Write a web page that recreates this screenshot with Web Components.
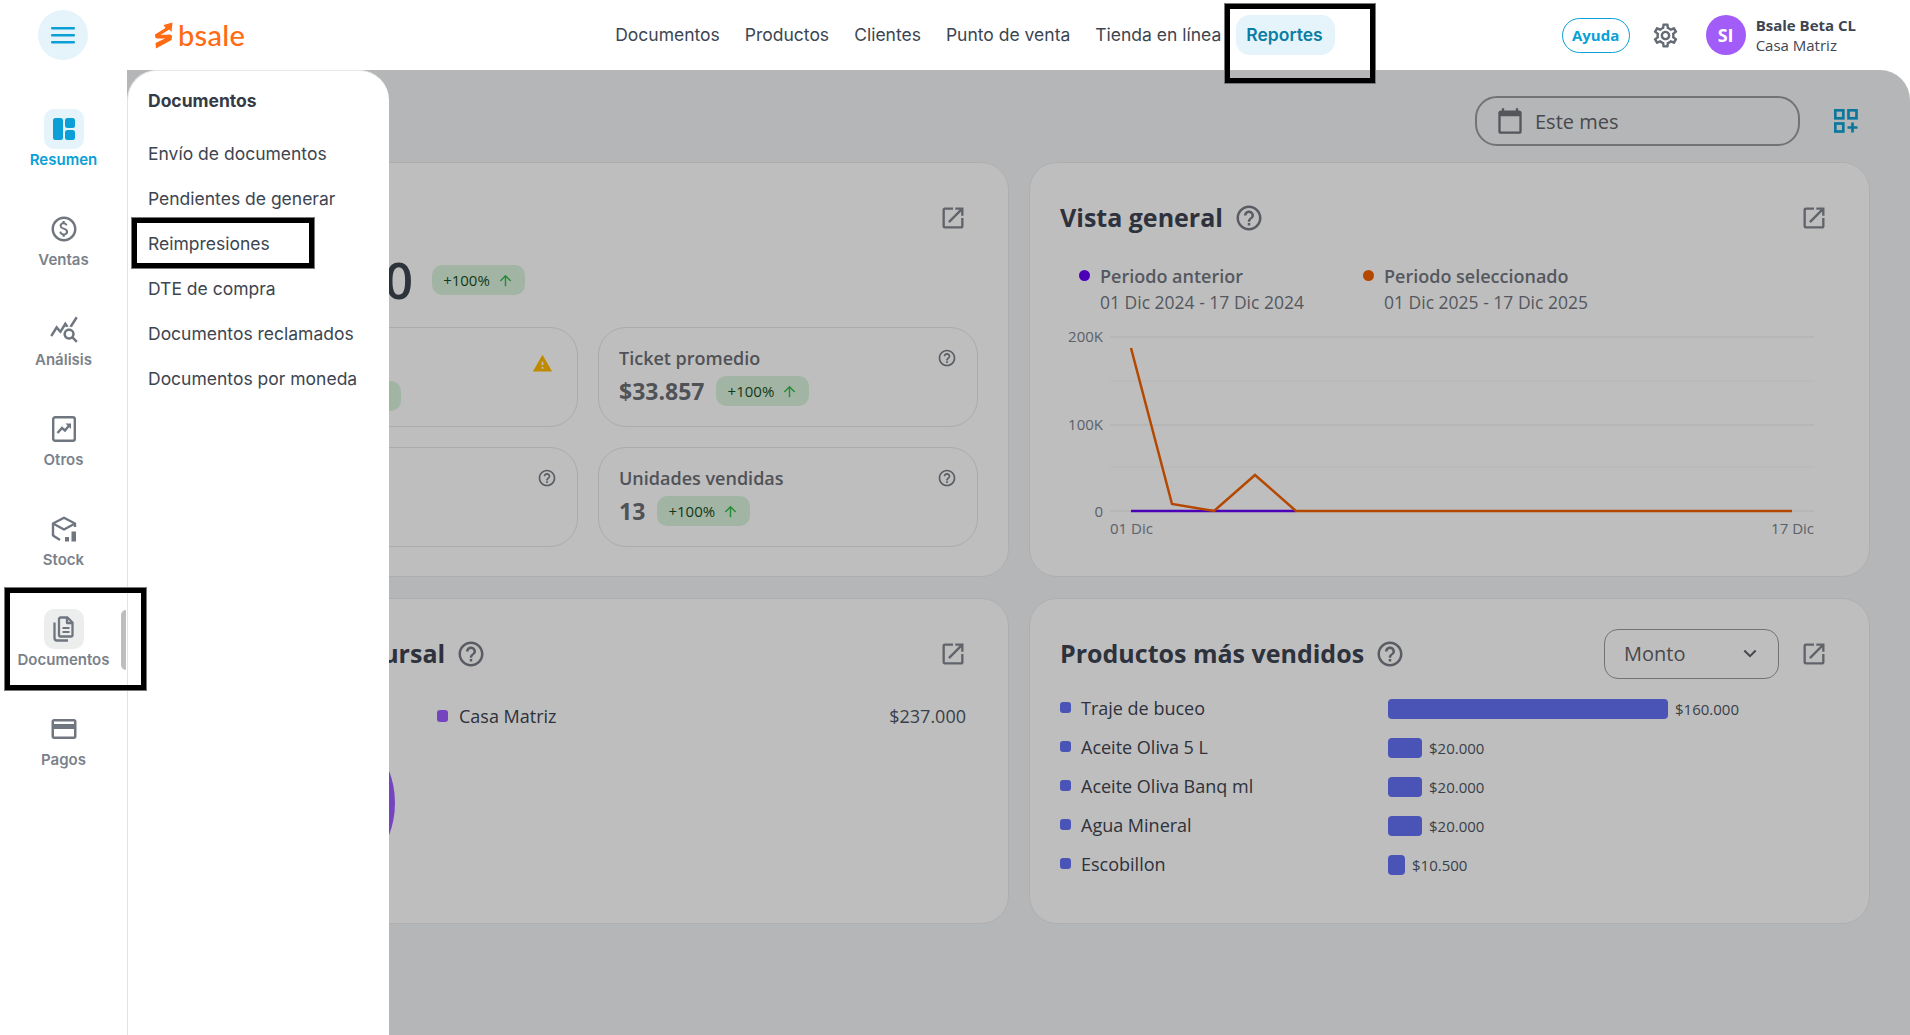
<!DOCTYPE html>
<html lang="es"><head><meta charset="utf-8"><title>Bsale</title>
<style>
html,body{margin:0;height:100%;overflow:hidden;background:#fff;font-family:"Open Sans",sans-serif;color:#2f3640}
</style></head><body>
<app-shell></app-shell>
<script>
const P={
help:'M11 18h2v-2h-2v2zm1-16C6.48 2 2 6.48 2 12s4.48 10 10 10 10-4.48 10-10S17.52 2 12 2zm0 18c-4.41 0-8-3.59-8-8s3.59-8 8-8 8 3.59 8 8-3.59 8-8 8zm0-14c-2.21 0-4 1.79-4 4h2c0-1.1.9-2 2-2s2 .9 2 2c0 2-3 1.75-3 5h2c0-2.25 3-2.5 3-5 0-2.21-1.79-4-4-4z',
open:'M19 19H5V5h7V3H5a2 2 0 0 0-2 2v14a2 2 0 0 0 2 2h14c1.1 0 2-.9 2-2v-7h-2v7zM14 3v2h3.59l-9.83 9.83 1.41 1.41L19 6.41V10h2V3h-7z',
cal:'M20 3h-1V1h-2v2H7V1H5v2H4c-1.1 0-2 .9-2 2v16c0 1.1.9 2 2 2h16c1.1 0 2-.9 2-2V5c0-1.1-.9-2-2-2zm0 18H4V8h16v13z',
warn:'M1 21h22L12 2 1 21zm12-3h-2v-2h2v2zm0-4h-2v-4h2v4z',
up:'M4 12l1.41 1.41L11 7.83V20h2V7.83l5.58 5.59L20 12l-8-8-8 8z',
gear:'M19.43 12.98c.04-.32.07-.64.07-.98 0-.34-.03-.66-.07-.98l2.11-1.65c.19-.15.24-.42.12-.64l-2-3.46a.5.5 0 0 0-.61-.22l-2.49 1c-.52-.4-1.08-.73-1.69-.98l-.38-2.65A.488.488 0 0 0 14 2h-4c-.25 0-.46.18-.49.42l-.38 2.65c-.61.25-1.17.59-1.69.98l-2.49-1a.566.566 0 0 0-.18-.03c-.17 0-.34.09-.43.25l-2 3.46c-.13.22-.07.49.12.64l2.11 1.65c-.04.32-.07.65-.07.98 0 .33.03.66.07.98l-2.11 1.65c-.19.15-.24.42-.12.64l2 3.46a.5.5 0 0 0 .61.22l2.49-1c.52.4 1.08.73 1.69.98l.38 2.65c.03.24.24.42.49.42h4c.25 0 .46-.18.49-.42l.38-2.65c.61-.25 1.17-.59 1.69-.98l2.49 1c.06.02.12.03.18.03.17 0 .34-.09.43-.25l2-3.46c.12-.22.07-.49-.12-.64l-2.11-1.65zm-1.98-1.71c.04.31.05.52.05.73 0 .21-.02.43-.05.73l-.14 1.13.89.7 1.08.84-.7 1.21-1.27-.51-1.04-.42-.9.68c-.43.32-.84.56-1.25.73l-1.06.43-.16 1.13-.2 1.35h-1.4l-.19-1.35-.16-1.13-1.06-.43c-.43-.18-.83-.41-1.23-.71l-.91-.7-1.06.43-1.27.51-.7-1.21 1.08-.84.89-.7-.14-1.13c-.03-.31-.05-.54-.05-.74s.02-.43.05-.73l.14-1.13-.89-.7-1.08-.84.7-1.21 1.27.51 1.04.42.9-.68c.43-.32.84-.56 1.25-.73l1.06-.43.16-1.13.2-1.35h1.39l.19 1.35.16 1.13 1.06.43c.43.18.83.41 1.23.71l.91.7 1.06-.43 1.27-.51.7 1.21-1.07.85-.89.7.14 1.13zM12 8c-2.21 0-4 1.79-4 4s1.79 4 4 4 4-1.79 4-4-1.79-4-4-4zm0 6c-1.1 0-2-.9-2-2s.9-2 2-2 2 .9 2 2-.9 2-2 2z',
card:'M20 4H4c-1.11 0-1.99.89-1.99 2L2 18c0 1.11.89 2 2 2h16c1.11 0 2-.89 2-2V6c0-1.11-.89-2-2-2zm0 14H4v-6h16v6zm0-10H4V6h16v2z',
money:'M12 2C6.48 2 2 6.48 2 12s4.48 10 10 10 10-4.48 10-10S17.52 2 12 2zm0 18c-4.41 0-8-3.59-8-8s3.59-8 8-8 8 3.59 8 8-3.59 8-8 8zM12.4 11.1c-1.6-.5-2.3-.85-2.3-1.7 0-.9 1-1.25 1.6-1.25 1.15 0 1.6.9 1.7 1.2l1.4-.6c-.15-.4-.75-1.7-2.25-2V5.6h-1.8v1.15c-2.2.5-2.2 2.55-2.2 2.65 0 2 2 2.6 3 2.95 1.4.5 2 .95 2 1.8 0 1-1 1.45-1.75 1.45-1.6 0-2.1-1.65-2.15-1.85l-1.45.6c.55 1.95 2 2.45 2.65 2.6v1.15h1.8v-1.1c.45-.1 2.65-.55 2.65-2.85 0-1.25-.55-2.3-2.9-3.05z',
stats:'M19.88 18.47c.44-.7.7-1.51.7-2.39 0-2.49-2.01-4.5-4.5-4.5s-4.5 2.01-4.5 4.5 2.01 4.5 4.49 4.5c.88 0 1.7-.26 2.39-.7L21.58 23 23 21.58l-3.12-3.11zm-3.8.11a2.5 2.5 0 0 1 0-5 2.5 2.5 0 0 1 0 5zm-.36-8.5c-.74.02-1.45.18-2.1.45l-.55-.83-3.8 6.18-3.01-3.52-3.63 5.81L1 17l5-8 3 3.5L13 6l2.72 4.08zm2.59.5c-.64-.28-1.33-.45-2.05-.49L21.38 2 23 3.18l-4.69 7.4z'
};
const svg=(d,s,c='currentColor',ex='')=>`<svg width="${s}" height="${s}" viewBox="0 0 24 24" fill="${c}" style="display:block;flex:none;${ex}"><path d="${d}"/></svg>`;
function def(name,css,html){
  customElements.define(name,class extends HTMLElement{
    constructor(){super();const r=this.attachShadow({mode:'open'});r.innerHTML=`<style>${css}</style>`+(typeof html==='function'?html(this):html);}
  });
}

const ICONS={
 resumen:`<svg width="24" height="24" viewBox="0 0 24 24" fill="#0a9fd6"><rect x="1" y="1" width="10" height="22" rx="2.5"/><rect x="13" y="1" width="10" height="10" rx="2.5"/><rect x="13" y="13" width="10" height="10" rx="2.5"/></svg>`,
 ventas:svg(P.money,30,'#6f7680'),
 analisis:svg(P.stats,30,'#6f7680'),
 otros:`<svg width="24" height="26" viewBox="0 0 24 26" fill="none" stroke="#6f7680" stroke-width="2.4"><rect x="1.2" y="1.2" width="21.600" height="23.600" rx="2"/><path d="M5.500 17l4.500-5 3 2.500 4.500-5.500" stroke-width="2.400"/><path d="M13.500 7.500h5.500v5.500z" fill="#6f7680" stroke="none"/></svg>`,
 stock:`<svg width="26" height="27" viewBox="0 0 26 27" fill="none" stroke="#6f7680" stroke-width="2.4" stroke-linejoin="round"><path d="M24 11V7.500L13 1.800 2 7.500v12l7 4.500"/><path d="M2 7.500l11 6 11-6"/><rect x="14" y="21" width="4" height="4.500" fill="#6f7680" stroke="none"/><rect x="20.500" y="15.500" width="4.500" height="10" fill="#6f7680" stroke="none"/></svg>`,
 documentos:`<svg width="21" height="26" viewBox="0 0 21 26" fill="none" stroke="#6f7680" stroke-width="2.300" stroke-linejoin="round"><path d="M7.500 1.500h7l5 5V19a1.500 1.500 0 0 1-1.500 1.500H7.500A1.500 1.500 0 0 1 6 19V3a1.500 1.500 0 0 1 1.500-1.500z"/><path d="M14 1.500v5.500h5.500"/><path d="M1.500 6.500V22a2.500 2.500 0 0 0 2.500 2.500H15"/><path d="M9.500 12h7M9.500 16h7" stroke-width="2"/></svg>`,
 pagos:svg(P.card,30,'#6f7680')
};

def('nav-item',`
:host{display:flex;flex-direction:column;align-items:center;height:100px;font:600 15px/20px Inter,sans-serif;color:#7b818a;position:relative}
.tile{width:40px;height:40px;border-radius:10px;display:flex;align-items:center;justify-content:center}
:host([state=active]){color:#0a9fd6}
:host([state=active]) .tile{background:#e5f4fa}
:host([state=open]) .tile{background:#eceded}
.lb{margin-top:1px}
.bar{display:none;position:absolute;right:1px;top:1px;width:5px;height:60px;background:#bcbdbf;border-radius:5px 0 0 5px}
:host([state=open]) .bar{display:block}
`,el=>`<div class="tile">${ICONS[el.getAttribute('icon')]}</div><div class="lb"><slot></slot></div><div class="bar"></div>`);

def('side-nav',`
:host{display:block;width:127px;box-sizing:border-box;padding-top:39px;background:#fff;flex:none}
`,`<nav-item icon="resumen" state="active">Resumen</nav-item><nav-item icon="ventas">Ventas</nav-item><nav-item icon="analisis">Análisis</nav-item><nav-item icon="otros">Otros</nav-item><nav-item icon="stock">Stock</nav-item><nav-item icon="documentos" state="open">Documentos</nav-item><nav-item icon="pagos">Pagos</nav-item>`);

def('bsale-logo',`
:host{display:flex;align-items:center;gap:5px;color:#ff6a13;font:500 29px/1 Lato,sans-serif;letter-spacing:.3px}
span{margin-top:-1px}
`,`<svg width="19" height="27" viewBox="0 0 19 27" fill="#ff6a13"><path d="M1 12.500L11.500 6 9.500 3 18.500.5 17.500 10 15.200 7.500 6.500 13 15.500 12.500Q18 12.500 18 15L17.500 18 2 26.500 1.500 21 11 16.500 3 16.500Q1 16 1 14z"/></svg><span>bsale</span>`);

def('top-bar',`
:host{display:flex;align-items:center;height:70px;position:relative;background:#fff;font:400 17.500px/24px Inter,sans-serif;color:#3d4551;flex:none}
.burger{margin-left:38px;width:50px;height:50px;border-radius:50%;background:#e5f4fa;display:flex;align-items:center;justify-content:center}
bsale-logo{margin-left:66px}
nav{display:flex;align-items:center;gap:25px;margin-left:370px}
nav span{white-space:nowrap;line-height:40px}
nav span.on{background:#e5f4fa;color:#0a7ea4;font-weight:600;padding:0 12px 0 10px;border-radius:14px;margin-left:-10px}
.right{margin-left:auto;display:flex;align-items:center;font-family:"Open Sans",sans-serif;padding-right:54px}
.ayuda{box-sizing:border-box;width:68px;height:35px;border:1px solid #0a9fd6;border-radius:18px;color:#0a9fd6;font:700 15px/33px "Open Sans",sans-serif;text-align:center}
.gear{margin-left:21px;color:#646b75}
.av{margin-left:26px;width:40px;height:40px;border-radius:50%;background:#a25cf8;color:#fff;font:700 18px/40px "Open Sans",sans-serif;text-align:center}
.who{margin-left:10px;font-size:15px;line-height:20px}
.who b{display:block;font-weight:700}
`,`<div class="burger"><svg width="24" height="18" viewBox="0 0 24 18" fill="#0a9fd6"><rect width="24" height="2.600" rx="1.300" y="1"/><rect width="24" height="2.600" rx="1.300" y="8"/><rect width="24" height="2.600" rx="1.300" y="15"/></svg></div>
<bsale-logo></bsale-logo>
<nav><span>Documentos</span><span>Productos</span><span>Clientes</span><span>Punto de venta</span><span>Tienda en línea</span><span class="on">Reportes</span></nav>
<div class="right"><div class="ayuda">Ayuda</div><div class="gear">${svg(P.gear,29)}</div><div class="av">SI</div><div class="who"><b>Bsale Beta CL</b>Casa Matriz</div></div>`);

def('sub-menu',`
:host{position:absolute;left:0;top:0;bottom:0;width:262px;box-sizing:border-box;background:#fff;border-left:1px solid #e2e3e4;border-top:1px solid #e8e8e8;border-radius:30px 30px 0 0;padding:17px 0 0 20px;font:400 17.500px/24px Inter,sans-serif;color:#3d4551;z-index:3}
h3{margin:0 0 28px;font:700 17.500px/26px Inter,sans-serif;color:#343b46;}
div{height:24px;margin-bottom:21px;white-space:nowrap}
`,`<h3>Documentos</h3><div>Envío de documentos</div><div>Pendientes de generar</div><div>Reimpresiones</div><div>DTE de compra</div><div>Documentos reclamados</div><div>Documentos por moneda</div>`);

def('trend-badge',`
:host{display:inline-flex;align-items:center;justify-content:center;gap:7px;box-sizing:border-box;width:93px;height:30px;border-radius:10px;background:#d9f2dc;color:#1a4d23;font:400 15px/1 "Open Sans",sans-serif;flex:none}
svg{color:#35b84a}
`,`<span>+100%</span>${svg(P.up,17)}`);

def('dash-card',`
:host{display:block;box-sizing:border-box;background:#fefefe;border:1px solid #e9e9e9;border-radius:28px;padding:36px 30px 0 29px;overflow:hidden;min-width:0}
.h{display:flex;align-items:center;height:38px;padding-right:11px}
.t{font:700 25px/38px "Open Sans",sans-serif;color:#3d4350;white-space:nowrap;margin:-2px 0 0 1px}
.q{margin-left:11px;color:#777c84}
.sp{flex:1}
.o{color:#80858c;margin-left:21px}
`,el=>`<div class="h"><span class="t">${el.getAttribute('heading')||''}</span><span class="q">${el.hasAttribute('heading')?svg(P.help,30):''}</span><span class="sp"></span><slot name="action"></slot><span class="o">${svg(P.open,28)}</span></div><slot></slot>`);

def('kpi-card',`
:host{display:block;box-sizing:border-box;height:100px;border:1px solid #e4e4e4;border-radius:28px;padding:19px 20px 0 20px;position:relative;overflow:hidden}
.l{font:600 18px/22px "Open Sans",sans-serif;color:#6b6e74;height:22px;white-space:nowrap}
.v{display:flex;align-items:center;gap:12px;height:30px;margin-top:7px;font:700 23px/30px "Open Sans",sans-serif;color:#6b6e74}
.i{position:absolute;right:20px;top:20px;color:#777c84}
:host([warn]) .i{color:#ffb800;right:24px;top:25px}
`,el=>`<div class="l"><slot name="label"></slot></div><div class="v"><slot></slot></div><div class="i">${el.hasAttribute('warn')?svg(P.warn,21):svg(P.help,20)}</div>`);

def('bar-row',`
:host{display:flex;align-items:center;height:39px;font:400 18px/24px "Open Sans",sans-serif;color:#3d4350}
.s{width:11px;height:11px;border-radius:3px;background:#6371f5;margin:-3px 0 0 1px}
.n{margin-left:10px;width:307px;white-space:nowrap;margin-top:-1px}
.b{height:20px;border-radius:4px;background:#6371f5}
.m{margin-left:7px;font-size:15px;color:#4d5563}
`,el=>`<span class="s"></span><span class="n"><slot></slot></span><span class="b" style="width:${el.getAttribute('w')}px"></span><span class="m">${el.getAttribute('value')}</span>`);

def('annot-box',`
:host{position:absolute;box-sizing:border-box;border:5px solid #000;outline:1px solid #77797c;z-index:9;pointer-events:none}
`,``);

def('line-chart',`
:host{display:block;margin:10px 0 0 1px}
svg{display:block}
text{font:400 15px "Open Sans",sans-serif;fill:#7a818c}
`,`<svg width="780" height="220" viewBox="1060 325 780 220" fill="none">
<g stroke="#efefef" stroke-width="1.500"><path d="M1110 337H1814M1110 425H1814M1110 511H1814"/><path d="M1110 381H1814M1110 467H1814" stroke="#f6f6f6"/></g>
<text x="1103" y="342" text-anchor="end">200K</text><text x="1103" y="430" text-anchor="end">100K</text><text x="1103" y="517" text-anchor="end">0</text>
<text x="1110" y="534">01 Dic</text><text x="1814" y="534" text-anchor="end">17 Dic</text>
<path d="M1131 511H1296" stroke="#6400f5" stroke-width="2.500"/>
<path d="M1131 348L1172 504 1214 511 1255 475 1296 511H1792" stroke="#f06000" stroke-width="2.500" stroke-linejoin="miter"/>
</svg>`);

def('dash-main',`
:host{display:block;position:relative;flex:1;min-width:0;height:100%;overflow:hidden}
.m{height:100%;box-sizing:border-box;background:#f2f3f5;border-radius:0 30px 0 0;padding:26px 40px 0 41px;position:relative;overflow:hidden}
.shade{position:absolute;inset:0;background:rgba(0,0,0,.25);z-index:2}
.tb{display:flex;justify-content:flex-end;align-items:center;height:50px}
.date{box-sizing:border-box;width:325px;height:50px;border:2px solid #999a9c;border-radius:22px;display:flex;align-items:center;padding-left:19px;font:400 20px/1 "Open Sans",sans-serif;color:#5f6267;gap:11px}
.date span{margin-top:1px}
.date svg{color:#72737a}
.gr{margin-left:34px;margin-right:12px}
.grid{display:grid;grid-template-columns:841px 841px;grid-template-rows:415px 326px;gap:21px 20px;margin-top:16px}
.big{display:flex;align-items:center;height:50px;margin-top:18px;gap:19px;font:600 50px/50px "Open Sans",sans-serif;color:#3d444f;margin-left:1px}
.big .num{display:block;width:214px;text-align:right;flex:none}
.in{display:grid;grid-template-columns:380px 380px;grid-auto-rows:100px;gap:20px;margin-top:22px}
.leg{display:flex;margin-top:25px;margin-left:20px;font:400 17.500px/25px "Open Sans",sans-serif;color:#71767e}
.leg>div{width:284px;position:relative;padding-left:21px;box-sizing:border-box;white-space:nowrap}
.leg b{font-weight:600;display:block;font-size:18px;line-height:28px}
.leg i{position:absolute;left:0;top:8px;width:11px;height:11px;border-radius:50%}
.row3{display:flex;align-items:flex-start}
.donut{margin:40px 0 0 17px;flex:none}
.cm{flex:1;margin:31px 12px 0 42px;display:flex;align-items:center;height:24px;font:400 18px/24px "Open Sans",sans-serif;color:#3d4350}
.cm i{width:11px;height:12px;border-radius:3px;background:#9c5cff;margin-right:11px}
.cm span:last-child{margin-left:auto;color:#4d5563}
.sel{box-sizing:border-box;width:175px;height:50px;border:1px solid #999a9c;border-radius:14px;display:flex;align-items:center;justify-content:space-between;padding:0 21px 0 19px;font:400 20px/1 "Open Sans",sans-serif;color:#5f6267;margin-top:-1px}
.rows{margin-top:16px}
.hb{margin:10px 0 0 -115px}
.spc{display:inline-block;width:192px}
`,`<div class="m">
<div class="tb"><div class="date">${svg(P.cal,28)}<span>Este mes</span></div>
<svg class="gr" width="24" height="24" viewBox="0 0 24 24" fill="none" stroke="#0f9fd2" stroke-width="2.700"><rect x="1.300" y="1.300" width="8" height="8"/><rect x="14.500" y="1.300" width="8" height="8"/><rect x="1.300" y="14.500" width="8" height="8"/><path d="M18.500 13.500v10M13.500 18.500h10"/></svg></div>
<div class="grid">
<dash-card>
<div class="big"><span class="num">0</span><trend-badge></trend-badge></div>
<div class="in">
<kpi-card warn><span class="spc"></span><trend-badge class="hb"></trend-badge></kpi-card>
<kpi-card><span slot="label">Ticket promedio</span>$33.857<trend-badge></trend-badge></kpi-card>
<kpi-card></kpi-card>
<kpi-card><span slot="label">Unidades vendidas</span>13<trend-badge></trend-badge></kpi-card>
</div></dash-card>
<dash-card heading="Vista general">
<div class="leg"><div><i style="background:#6400f5"></i><b>Periodo anterior</b>01 Dic 2024 - 17 Dic 2024</div><div><i style="background:#f06000"></i><b>Periodo seleccionado</b>01 Dic 2025 - 17 Dic 2025</div></div>
<line-chart></line-chart>
</dash-card>
<dash-card heading="Ventas por sucursal">
<div class="row3"><svg class="donut" width="180" height="180" viewBox="0 0 180 180" fill="none"><circle cx="90" cy="90" r="70" stroke="#9c5cff" stroke-width="40"/></svg>
<div class="cm"><i></i><span>Casa Matriz</span><span>$237.000</span></div></div>
</dash-card>
<dash-card heading="Productos más vendidos">
<div class="sel" slot="action"><span>Monto</span><svg width="14" height="9" viewBox="0 0 16 10" fill="none" stroke="#5f6267" stroke-width="2.400"><path d="M1.500 1.500L8 8l6.500-6.500"/></svg></div>
<div class="rows">
<bar-row w="280" value="$160.000">Traje de buceo</bar-row>
<bar-row w="34" value="$20.000">Aceite Oliva 5 L</bar-row>
<bar-row w="34" value="$20.000">Aceite Oliva Banq ml</bar-row>
<bar-row w="34" value="$20.000">Agua Mineral</bar-row>
<bar-row w="17" value="$10.500">Escobillon</bar-row>
</div></dash-card>
</div>
<div class="shade"></div>
</div><sub-menu></sub-menu>`);

def('app-shell',`
:host{display:flex;flex-direction:column;height:100vh;position:relative;overflow:hidden;background:#fff}
.body{display:flex;flex:1;min-height:0}
.a1{left:1225px;top:4px;width:150px;height:79px}
.a2{left:132px;top:218px;width:182px;height:50px}
.a3{left:5px;top:588px;width:141px;height:102px}
`,`<top-bar></top-bar><div class="body"><side-nav></side-nav><dash-main></dash-main></div>
<annot-box class="a1"></annot-box><annot-box class="a2"></annot-box><annot-box class="a3"></annot-box>`);
</script></body></html>
